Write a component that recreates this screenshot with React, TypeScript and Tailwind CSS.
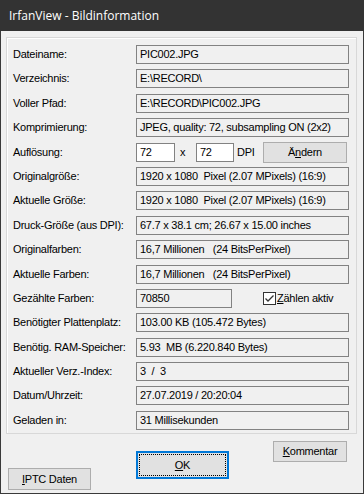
import React from "react";

const font = { fontFamily: '"Liberation Sans", Arial, sans-serif' };

function Field({ children, w = "w-[213px]" }: { children?: React.ReactNode; w?: string }) {
  return (
    <div className={`${w} h-[19px] border border-[#828282] bg-[#f0f0f0] pl-[3px] flex items-center whitespace-pre overflow-hidden`}>
      {children}
    </div>
  );
}

function Row({ label, children }: { label: string; children: React.ReactNode }) {
  return (
    <div className="flex h-[19px] items-center">
      <div className="w-[123px] whitespace-pre">{label}</div>
      {children}
    </div>
  );
}

export default function App() {
  return (
    <div className="w-[364px] h-[494px] bg-[#f0f0f0] text-[11px] text-black leading-none" style={font}>
      <div className="h-[31px] bg-[#333333] text-white flex items-center pl-[9px] text-[12px]" style={{ fontFamily: '"Open Sans", "Noto Sans", sans-serif' }}>
        IrfanView - Bildinformation
      </div>
      <div className="h-[463px] border-x border-b border-[#3a3a3a] pl-[5px] pt-[6px] flex flex-col tracking-[-0.25px]">
        <div className="w-[351px] h-[397px] border border-[#d8d8d8] shadow-[inset_1px_1px_0_#ffffff] pl-[6px] pt-[7px] flex flex-col gap-[5.4px]">
          <Row label="Dateiname:"><Field>PIC002.JPG</Field></Row>
          <Row label="Verzeichnis:"><Field>E:\RECORD\</Field></Row>
          <Row label="Voller Pfad:"><Field>E:\RECORD\PIC002.JPG</Field></Row>
          <Row label="Komprimierung:"><Field>JPEG, quality: 72, subsampling ON (2x2)</Field></Row>
          <Row label="Auflösung:">
            <div className="w-[39px] h-[19px] border border-[#828282] bg-white pl-[3px] flex items-center">72</div>
            <div className="w-[21px] pl-[5px]">x</div>
            <div className="w-[38px] h-[19px] border border-[#828282] bg-white pl-[3px] flex items-center">72</div>
            <div className="ml-[3px] w-[26px]">DPI</div>
            <div className="w-[84px] h-[21px] border border-[#adadad] bg-[#e1e1e1] flex items-center justify-center">
              <span>Ä<span className="underline underline-offset-1">n</span>dern</span>
            </div>
          </Row>
          <Row label="Originalgröße:"><Field>1920 x 1080  Pixel (2.07 MPixels) (16:9)</Field></Row>
          <Row label="Aktuelle Größe:"><Field>1920 x 1080  Pixel (2.07 MPixels) (16:9)</Field></Row>
          <Row label="Druck-Größe (aus DPI):"><Field>67.7 x 38.1 cm; 26.67 x 15.00 inches</Field></Row>
          <Row label="Originalfarben:"><Field>16,7 Millionen   (24 BitsPerPixel)</Field></Row>
          <Row label="Aktuelle Farben:"><Field>16,7 Millionen   (24 BitsPerPixel)</Field></Row>
          <Row label="Gezählte Farben:">
            <Field w="w-[96px]">70850</Field>
            <div className="ml-[31px] w-[13px] h-[13px] border border-[#333333] bg-white flex items-center justify-center">
              <svg width="11" height="11" viewBox="0 0 11 11">
                <path d="M1.5 5.5 L4 8 L9.5 2.5" fill="none" stroke="#333333" strokeWidth="1.3" />
              </svg>
            </div>
            <div className="ml-[1px]"><span className="underline underline-offset-1">Z</span>ählen aktiv</div>
          </Row>
          <Row label="Benötigter Plattenplatz:"><Field>103.00 KB (105.472 Bytes)</Field></Row>
          <Row label="Benötig. RAM-Speicher:"><Field>5.93  MB (6.220.840 Bytes)</Field></Row>
          <Row label="Aktueller Verz.-Index:"><Field>3  /  3</Field></Row>
          <Row label="Datum/Uhrzeit:"><Field>27.07.2019 / 20:20:04</Field></Row>
          <Row label="Geladen in:"><Field>31 Millisekunden</Field></Row>
        </div>
        <div className="flex items-start">
          <div className="ml-[2px] mt-[34px] w-[83px] h-[22px] border border-[#adadad] bg-[#e1e1e1] flex items-center justify-center">
            <span><span className="underline underline-offset-1">I</span>PTC Daten</span>
          </div>
          <div className="ml-[45px] mt-[17px] w-[93px] h-[28px] border-2 border-[#0078d7] bg-[#e1e1e1] p-[1px]">
            <div className="w-full h-full border border-dotted border-black flex items-center justify-center">
              <span><span className="underline underline-offset-1">O</span>K</span>
            </div>
          </div>
          <div className="ml-[44px] mt-[7px] w-[74px] h-[21px] border border-[#adadad] bg-[#e1e1e1] flex items-center justify-center">
            <span><span className="underline underline-offset-1">K</span>ommentar</span>
          </div>
        </div>
      </div>
    </div>
  );
}
